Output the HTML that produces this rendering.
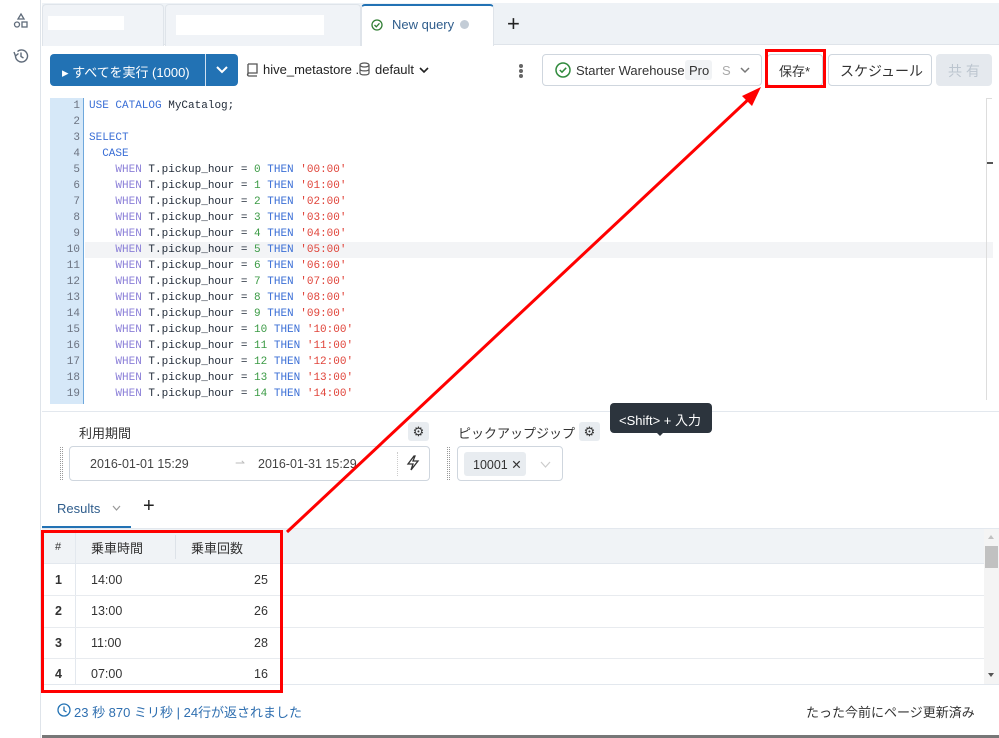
<!DOCTYPE html>
<html><head><meta charset="utf-8">
<style>
*{box-sizing:border-box;margin:0;padding:0}
body{width:999px;height:738px;overflow:hidden;background:#fff;font-family:"Liberation Sans","Noto Sans CJK JP",sans-serif;color:#1f2937;position:relative;font-size:13px}
.a{position:absolute}
.code{font-family:"Liberation Mono","Noto Sans CJK JP",monospace;font-size:11px;white-space:pre;line-height:16px}
.kw{color:#3b6fd6}.wh{color:#8b7fd8}.num{color:#3a9a44}.str{color:#e0443a}.id{color:#1f2937}
.btn{border:1px solid #cfd6de;border-radius:4px;background:#fff}
</style></head><body>
<div class="a" style="left:0;top:0;width:41px;height:738px;border-right:1px solid #dfe4ea;background:#fff"></div>
<svg class="a" style="left:12px;top:12px" width="18" height="18" viewBox="0 0 18 18" fill="none" stroke="#5f6b7a" stroke-width="1.3"><path d="M9 2 L12 7 L6 7 Z"/><circle cx="5" cy="12.5" r="2.5"/><rect x="10" y="10" width="5" height="5"/></svg>
<svg class="a" style="left:12px;top:47px" width="18" height="18" viewBox="0 0 18 18" fill="none" stroke="#5f6b7a" stroke-width="1.4"><path d="M3.5 9 A6 6 0 1 0 5.5 4.5"/><path d="M2 5 L3.5 9 L6.5 6.5"/><path d="M9 5.5 V9.5 L11.5 11"/></svg>
<div class="a" style="left:42px;top:3px;width:957px;height:42px;background:#eef2f6;border-bottom:1px solid #dfe4ea"></div>
<div class="a" style="left:42px;top:4px;width:122px;height:42px;border:1px solid #dfe4ea;border-bottom:none;border-radius:4px 4px 0 0;background:#f0f3f7"></div>
<div class="a" style="left:48px;top:16px;width:76px;height:14px;background:#fff"></div>
<div class="a" style="left:165px;top:4px;width:196px;height:42px;border:1px solid #dfe4ea;border-bottom:none;border-radius:4px 4px 0 0;background:#f0f3f7"></div>
<div class="a" style="left:176px;top:15px;width:148px;height:20px;background:#fff"></div>
<div class="a" style="left:361px;top:4px;width:133px;height:42px;background:#fff;border-top:2px solid #2272b4;border-left:1px solid #dfe4ea;border-right:1px solid #dfe4ea;border-radius:4px 4px 0 0"></div>
<svg class="a" style="left:371px;top:19px" width="12" height="12" viewBox="0 0 12 12" fill="none" stroke="#2f7d32" stroke-width="1.3"><circle cx="6" cy="6" r="5"/><path d="M3.5 6 L5.3 7.8 L8.5 4.3"/></svg>
<div class="a" style="left:392px;top:17px;font-size:13px;color:#2f5d8c">New query</div>
<div class="a" style="left:460px;top:20px;width:9px;height:9px;border-radius:50%;background:#c3ccd6"></div>
<div class="a" style="left:507px;top:11px;font-size:22px;font-weight:300;color:#222">+</div>
<div class="a" style="left:50px;top:54px;width:188px;height:32px;background:#2272b4;border-radius:4px"></div>
<div class="a" style="left:205px;top:54px;width:1px;height:32px;background:#cfe0f1"></div>
<div class="a" style="left:62px;top:62px;color:#fff;font-size:13px">▸ すべてを実行 (1000)</div>
<svg class="a" style="left:215px;top:64px" width="14" height="12" viewBox="0 0 14 12" fill="none" stroke="#fff" stroke-width="2"><path d="M2 3 L7 8 L12 3"/></svg>
<svg class="a" style="left:246px;top:62px" width="13" height="15" viewBox="0 0 13 15" fill="none" stroke="#555" stroke-width="1.3"><path d="M2 2 H11 V11 H3 A1.5 1.5 0 0 0 3 14 H11 M2 2 V12.5"/></svg>
<div class="a" style="left:263px;top:62px;font-size:13px;color:#222">hive_metastore .</div>
<svg class="a" style="left:359px;top:62px" width="11" height="14" viewBox="0 0 11 14" fill="none" stroke="#555" stroke-width="1.2"><ellipse cx="5.5" cy="3" rx="4.5" ry="2"/><path d="M1 3 V11 C1 13.5 10 13.5 10 11 V3 M1 7 C1 9.5 10 9.5 10 7"/></svg>
<div class="a" style="left:375px;top:62px;font-size:13px;color:#222">default</div>
<svg class="a" style="left:419px;top:67px" width="10" height="7" viewBox="0 0 10 7" fill="none" stroke="#222" stroke-width="1.6"><path d="M1 1 L5 5 L9 1"/></svg>
<div class="a" style="left:519px;top:64px;width:4px;height:4px;border-radius:50%;background:#666;box-shadow:0 5px 0 #666,0 10px 0 #666"></div>
<div class="a btn" style="left:542px;top:54px;width:220px;height:32px"></div>
<svg class="a" style="left:555px;top:62px" width="16" height="16" viewBox="0 0 16 16" fill="none" stroke="#2f8a3c" stroke-width="1.5"><circle cx="8" cy="8" r="7"/><path d="M4.8 8 L7 10.2 L11.2 5.8"/></svg>
<div class="a" style="left:576px;top:63px;font-size:13px;color:#333">Starter Warehouse</div>
<div class="a" style="left:685px;top:60px;width:27px;height:20px;background:#f1f3f5;border-radius:3px;font-size:13px;color:#333;padding:3px 0 0 4px">Pro</div>
<div class="a" style="left:722px;top:63px;font-size:13px;color:#aaa">S</div>
<svg class="a" style="left:740px;top:67px" width="10" height="7" viewBox="0 0 10 7" fill="none" stroke="#777" stroke-width="1.5"><path d="M1 1 L5 5 L9 1"/></svg>
<div class="a btn" style="left:767px;top:54px;width:56px;height:32px"></div>
<div class="a" style="left:779px;top:61px;font-size:13px;color:#333">保存*</div>
<div class="a btn" style="left:828px;top:54px;width:104px;height:32px"></div>
<div class="a" style="left:840px;top:61px;font-size:14px;color:#333">スケジュール</div>
<div class="a" style="left:936px;top:54px;width:56px;height:32px;background:#e5e9ee;border-radius:4px"></div>
<div class="a" style="left:948px;top:61px;font-size:14px;color:#bcc5cf">共 有</div>
<div class="a" style="left:50px;top:98px;width:34px;height:306px;background:#d6e8f8;border-right:1px solid #6fa8dc"></div>
<div class="a" style="left:85px;top:242px;width:908px;height:16px;background:#f3f4f6"></div>
<div class="a" style="left:986px;top:98px;width:1px;height:302px;background:#ddd"></div>
<div class="a" style="left:986px;top:98px;width:6px;height:1px;background:#ddd"></div>
<div class="a" style="left:987px;top:162px;width:6px;height:2px;background:#555"></div>
<div class="a code" style="left:50px;top:98px;width:30px;text-align:right;color:#6b7280">1
2
3
4
5
6
7
8
9
10
11
12
13
14
15
16
17
18
19</div>
<div class="a code" style="left:89px;top:98px"><span class="kw">USE CATALOG</span> <span class="id">MyCatalog;</span>

<span class="kw">SELECT</span>
  <span class="kw">CASE</span>
    <span class="wh">WHEN</span> T.pickup_hour = <span class="num">0</span> <span class="kw">THEN</span> <span class="str">'00:00'</span>
    <span class="wh">WHEN</span> T.pickup_hour = <span class="num">1</span> <span class="kw">THEN</span> <span class="str">'01:00'</span>
    <span class="wh">WHEN</span> T.pickup_hour = <span class="num">2</span> <span class="kw">THEN</span> <span class="str">'02:00'</span>
    <span class="wh">WHEN</span> T.pickup_hour = <span class="num">3</span> <span class="kw">THEN</span> <span class="str">'03:00'</span>
    <span class="wh">WHEN</span> T.pickup_hour = <span class="num">4</span> <span class="kw">THEN</span> <span class="str">'04:00'</span>
    <span class="wh">WHEN</span> T.pickup_hour = <span class="num">5</span> <span class="kw">THEN</span> <span class="str">'05:00'</span>
    <span class="wh">WHEN</span> T.pickup_hour = <span class="num">6</span> <span class="kw">THEN</span> <span class="str">'06:00'</span>
    <span class="wh">WHEN</span> T.pickup_hour = <span class="num">7</span> <span class="kw">THEN</span> <span class="str">'07:00'</span>
    <span class="wh">WHEN</span> T.pickup_hour = <span class="num">8</span> <span class="kw">THEN</span> <span class="str">'08:00'</span>
    <span class="wh">WHEN</span> T.pickup_hour = <span class="num">9</span> <span class="kw">THEN</span> <span class="str">'09:00'</span>
    <span class="wh">WHEN</span> T.pickup_hour = <span class="num">10</span> <span class="kw">THEN</span> <span class="str">'10:00'</span>
    <span class="wh">WHEN</span> T.pickup_hour = <span class="num">11</span> <span class="kw">THEN</span> <span class="str">'11:00'</span>
    <span class="wh">WHEN</span> T.pickup_hour = <span class="num">12</span> <span class="kw">THEN</span> <span class="str">'12:00'</span>
    <span class="wh">WHEN</span> T.pickup_hour = <span class="num">13</span> <span class="kw">THEN</span> <span class="str">'13:00'</span>
    <span class="wh">WHEN</span> T.pickup_hour = <span class="num">14</span> <span class="kw">THEN</span> <span class="str">'14:00'</span></div>
<div class="a" style="left:42px;top:411px;width:957px;height:1px;background:#e3e8ee"></div>
<div class="a" style="left:79px;top:423px;font-size:13px;color:#333">利用期間</div>
<div class="a" style="left:408px;top:422px;width:21px;height:19px;background:#e8ecf0;border-radius:3px;text-align:center;font-size:13px;line-height:19px;color:#333">⚙</div>
<div class="a" style="left:60px;top:447px;width:3px;height:33px;border-left:1px dotted #999;border-right:1px dotted #999"></div>
<div class="a btn" style="left:69px;top:446px;width:361px;height:35px"></div>
<div class="a" style="left:90px;top:457px;font-size:12.5px;color:#444">2016-01-01 15:29</div>
<div class="a" style="left:235px;top:456px;font-size:12px;color:#bbb">⇀</div>
<div class="a" style="left:258px;top:457px;font-size:12.5px;color:#444">2016-01-31 15:29</div>
<div class="a" style="left:397px;top:452px;width:1px;height:24px;border-left:1px dotted #ccc"></div>
<svg class="a" style="left:406px;top:455px" width="14" height="16" viewBox="0 0 14 16" fill="none" stroke="#333" stroke-width="1.3"><path d="M8 1 L2 9 H7 L5 15 L12 6 H7 L9 1 Z"/></svg>
<div class="a" style="left:458px;top:423px;font-size:13px;color:#333">ピックアップジップ</div>
<div class="a" style="left:579px;top:422px;width:21px;height:19px;background:#e8ecf0;border-radius:3px;text-align:center;font-size:13px;line-height:19px;color:#333">⚙</div>
<div class="a" style="left:447px;top:447px;width:3px;height:33px;border-left:1px dotted #999;border-right:1px dotted #999"></div>
<div class="a btn" style="left:457px;top:446px;width:106px;height:35px"></div>
<div class="a" style="left:464px;top:452px;width:62px;height:24px;background:#e8ecf0;border-radius:3px;font-size:12.5px;color:#333;padding:5px 0 0 9px">10001 ✕</div>
<svg class="a" style="left:540px;top:461px" width="11" height="7" viewBox="0 0 11 7" fill="none" stroke="#ccc" stroke-width="1.2"><path d="M1 1 L5.5 6 L10 1"/></svg>
<div class="a" style="left:610px;top:403px;width:102px;height:30px;background:#2c343d;border-radius:4px;color:#fff;font-size:13px;padding:7px 0 0 9px">&lt;Shift&gt; + 入力</div>
<div class="a" style="left:656px;top:432px;width:0;height:0;border-left:4px solid transparent;border-right:4px solid transparent;border-top:4px solid #2c343d"></div>
<div class="a" style="left:57px;top:501px;font-size:13px;color:#2f5d8c">Results</div>
<svg class="a" style="left:112px;top:505px" width="9" height="6" viewBox="0 0 9 6" fill="none" stroke="#999" stroke-width="1.2"><path d="M1 1 L4.5 5 L8 1"/></svg>
<div class="a" style="left:143px;top:495px;font-size:20px;font-weight:300;color:#222">+</div>
<div class="a" style="left:42px;top:526px;width:89px;height:2px;background:#2272b4"></div>
<div class="a" style="left:42px;top:528px;width:957px;height:1px;background:#e3e8ee"></div>
<div class="a" style="left:42px;top:529px;width:942px;height:35px;background:#f0f3f6;border-bottom:1px solid #e3e8ee"></div>
<div class="a" style="left:75px;top:529px;width:1px;height:156px;background:#e3e8ee"></div>
<div class="a" style="left:175px;top:535px;width:1px;height:24px;background:#dde2e8"></div>
<div class="a" style="left:55px;top:541px;font-size:11px;color:#333">#</div>
<div class="a" style="left:91px;top:538px;font-size:13px;color:#333">乗車時間</div>
<div class="a" style="left:191px;top:538px;font-size:13px;color:#333">乗車回数</div>
<div class="a" style="left:42px;top:595px;width:942px;height:1px;background:#e8ebef"></div>
<div class="a" style="left:42px;top:627px;width:942px;height:1px;background:#e8ebef"></div>
<div class="a" style="left:42px;top:658px;width:942px;height:1px;background:#e8ebef"></div>
<div class="a" style="left:42px;top:684px;width:957px;height:1px;background:#e3e8ee"></div>
<div class="a" style="left:55px;top:573px;font-size:12.5px;color:#333;font-weight:bold">1</div>
<div class="a" style="left:91px;top:573px;font-size:12.5px;color:#333">14:00</div>
<div class="a" style="left:254px;top:573px;font-size:12.5px;color:#333">25</div>
<div class="a" style="left:55px;top:604px;font-size:12.5px;color:#333;font-weight:bold">2</div>
<div class="a" style="left:91px;top:604px;font-size:12.5px;color:#333">13:00</div>
<div class="a" style="left:254px;top:604px;font-size:12.5px;color:#333">26</div>
<div class="a" style="left:55px;top:636px;font-size:12.5px;color:#333;font-weight:bold">3</div>
<div class="a" style="left:91px;top:636px;font-size:12.5px;color:#333">11:00</div>
<div class="a" style="left:254px;top:636px;font-size:12.5px;color:#333">28</div>
<div class="a" style="left:55px;top:667px;font-size:12.5px;color:#333;font-weight:bold">4</div>
<div class="a" style="left:91px;top:667px;font-size:12.5px;color:#333">07:00</div>
<div class="a" style="left:254px;top:667px;font-size:12.5px;color:#333">16</div>
<div class="a" style="left:984px;top:529px;width:15px;height:155px;background:#f4f4f4"></div>
<div class="a" style="left:985px;top:546px;width:13px;height:22px;background:#c1c1c1"></div>
<div class="a" style="left:988px;top:535px;width:0;height:0;border-left:3.5px solid transparent;border-right:3.5px solid transparent;border-bottom:4px solid #c1c1c1"></div>
<div class="a" style="left:988px;top:673px;width:0;height:0;border-left:3.5px solid transparent;border-right:3.5px solid transparent;border-top:4px solid #555"></div>
<svg class="a" style="left:57px;top:703px" width="14" height="14" viewBox="0 0 14 14" fill="none" stroke="#2272b4" stroke-width="1.3"><circle cx="7" cy="7" r="6"/><path d="M7 3.5 V7.5 L9.5 9"/></svg>
<div class="a" style="left:74px;top:702px;font-size:13px;color:#2f6fb0">23 秒 870 ミリ秒 | 24行が返されました</div>
<div class="a" style="left:806px;top:702px;font-size:13px;color:#333">たった今前にページ更新済み</div>
<div class="a" style="left:42px;top:735px;width:957px;height:3px;background:#777"></div>
<div class="a" style="left:765px;top:49px;width:61px;height:39px;border:3px solid #f00"></div>
<div class="a" style="left:41px;top:530px;width:242px;height:163px;border:3px solid #f00"></div>
<svg class="a" style="left:0;top:0" width="999" height="738"><line x1="287" y1="532" x2="752" y2="96" stroke="#f00" stroke-width="3"/><polygon points="761,87 742,96 752,106" fill="#f00"/></svg>
</body></html>
